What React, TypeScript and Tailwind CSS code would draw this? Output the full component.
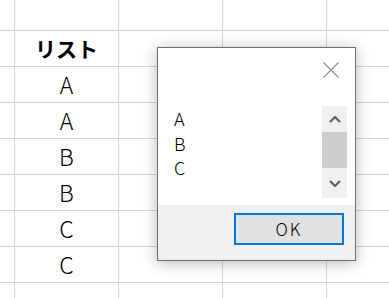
import React from "react";

const rows = ["", "リスト", "A", "A", "B", "B", "C", "C", ""];

function Cell({ text, first }: { text: string; first?: boolean }) {
  return (
    <div
      className={`flex items-center justify-center shrink-0 w-[104px] border-r border-[#d4d4d4] text-black ${
        first ? "font-bold text-[21px]" : "font-light text-[23px]"
      }`}
    >
      {text}
    </div>
  );
}

export default function App() {
  return (
    <div
      className="relative w-[389px] h-[298px] overflow-hidden bg-white"
      style={{ fontFamily: '"Noto Sans CJK JP", "Noto Sans", sans-serif' }}
    >
      {/* sheet grid */}
      <div className="flex flex-col">
        {rows.map((r, i) => (
          <div
            key={i}
            className={`flex shrink-0 border-b border-[#d4d4d4] ${i === 0 ? "h-[31px]" : "h-[36px]"}`}
          >
            <div className="w-[15px] shrink-0 border-r border-[#d4d4d4]" />
            <Cell text={r} first={i === 1} />
            <Cell text="" />
            <Cell text="" />
            <Cell text="" />
          </div>
        ))}
      </div>

      {/* dialog */}
      <div className="absolute left-[157px] top-[47px] w-[199px] h-[214px] border border-[#6f6f6f] bg-white shadow-[0_2px_14px_rgba(0,0,0,0.28)] flex flex-col">
        <div className="relative flex-1">
          <svg
            className="absolute left-[165px] top-[14px]"
            width="16"
            height="16"
            viewBox="0 0 16 16"
          >
            <path d="M0.5 0.5 L15.5 15.5 M15.5 0.5 L0.5 15.5" stroke="#8c8c8c" strokeWidth="1.1" fill="none" />
          </svg>

          <div className="absolute left-[16px] top-[58px] flex flex-col font-light text-[18px] leading-[24.5px] text-black">
            <span>A</span>
            <span>B</span>
            <span>C</span>
          </div>

          <div className="absolute left-[164px] top-[58px] w-[25px] h-[92px] bg-[#f0f0f0] flex flex-col">
            <div className="h-[26px] flex items-center justify-center">
              <svg width="12" height="7" viewBox="0 0 12 7">
                <path d="M1 6 L6 1 L11 6" stroke="#606060" strokeWidth="2.2" fill="none" />
              </svg>
            </div>
            <div className="h-[36px] bg-[#cdcdcd]" />
            <div className="flex-1 flex items-center justify-center">
              <svg width="12" height="7" viewBox="0 0 12 7">
                <path d="M1 1 L6 6 L11 1" stroke="#606060" strokeWidth="2.2" fill="none" />
              </svg>
            </div>
          </div>
        </div>

        <div className="h-[55px] bg-[#f0f0f0] flex items-start justify-end pt-[8px] pr-[11px]">
          <button className="w-[110px] h-[32px] border-2 border-[#0078d7] bg-[#e1e1e1] text-[17px] tracking-[2px] text-black font-light">
            OK
          </button>
        </div>
      </div>
    </div>
  );
}
